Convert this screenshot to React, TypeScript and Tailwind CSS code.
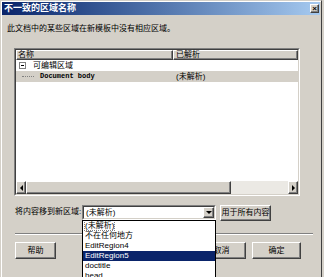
import React from 'react';

const font = "font-['Liberation_Sans','Noto_Sans_CJK_SC',sans-serif]";

// raised Win2000-style button edge
const raised =
  'bg-[#d4d0c8] border border-t-white border-l-white border-r-[#404040] border-b-[#404040] shadow-[inset_-1px_-1px_0_#808080]';

const Arrow: React.FC<{ dir: 'left' | 'right' | 'down' }> = ({ dir }) => {
  const pts = dir === 'left' ? '4,0 4,6 1,3' : dir === 'right' ? '1,0 1,6 4,3' : '0,1 6,1 3,4';
  return (
    <svg width={dir === 'down' ? 6 : 5} height={dir === 'down' ? 5 : 6} viewBox={dir === 'down' ? '0 0 6 5' : '0 0 5 6'}>
      <polygon points={pts} fill="#000" />
    </svg>
  );
};

const App: React.FC = () => {
  const options = ['(未解析)', '不在任何地方', 'EditRegion4', 'EditRegion5', 'doctitle', 'head'];

  return (
    <div className={`w-[324px] h-[277px] bg-[#d4d0c8] overflow-hidden relative text-black ${font}`}>
      <div className="w-[322px] h-[277px] border-l border-t border-r border-l-[#d4d0c8] border-t-[#d4d0c8] border-r-[#404040] shadow-[inset_1px_1px_0_#fff]">
        {/* Title bar */}
        <div className="mx-[1px] mt-[1px] h-[13px] flex items-center justify-between bg-linear-to-r from-[#0a246a] to-[#a6caf0]">
          <span className="pl-[2px] text-[9px] leading-[13px] font-bold text-white">不一致的区域名称</span>
          <div className={`${raised} w-[9px] h-[9px] mr-[1px] flex items-center justify-center`}>
            <span className="text-[8px] leading-[8px] font-bold">×</span>
          </div>
        </div>

        {/* Message */}
        <div className="mt-[9px] ml-[6px] h-[10px] text-[8px] leading-[10px]">此文档中的某些区域在新模板中没有相应区域。</div>

        {/* List */}
        <div className="mt-[14px] ml-[13px] w-[286px] h-[148px] border border-t-[#808080] border-l-[#808080] border-r-white border-b-white">
          <div className="w-full h-full border border-t-[#404040] border-l-[#404040] border-r-[#d4d0c8] border-b-[#d4d0c8] bg-white flex flex-col">
            <div className="h-[10px] flex">
              <div className={`${raised} w-[157px] h-[10px] text-[8px] leading-[8px] pl-[1px]`}>名称</div>
              <div className={`${raised} flex-1 h-[10px] text-[8px] leading-[8px] pl-[2px]`}>已解析</div>
            </div>
            <div className="h-[11px] flex items-center">
              <div className="ml-[3px] w-[7px] h-[7px] border border-[#808080] flex items-center justify-center">
                <div className="w-[3px] h-px bg-black" />
              </div>
              <span className="ml-[7px] text-[8px] leading-[11px]">可编辑区域</span>
            </div>
            <div className="h-[11px] flex items-center bg-[#d4d0c8]">
              <div className="w-[157px] flex items-center">
                <div className="ml-[6px] w-[12px] border-t border-dotted border-[#808080]" />
                <span className="ml-[6px] font-['Liberation_Mono',monospace] font-bold text-[7px] leading-[11px]">Document body</span>
              </div>
              <span className="ml-[3px] text-[8px] leading-[11px]">(未解析)</span>
            </div>
            <div className="flex-1" />
            {/* horizontal scrollbar */}
            <div className="h-[13px] flex">
              <div className={`${raised} w-[10px] h-[13px] flex items-center justify-center`}>
                <Arrow dir="left" />
              </div>
              <div className={`${raised} w-[205px] h-[13px]`} />
              <div className="flex-1 h-[13px] bg-[#ebe9e4]" />
              <div className={`${raised} w-[10px] h-[13px] flex items-center justify-center`}>
                <Arrow dir="right" />
              </div>
            </div>
          </div>
        </div>

        {/* Move content row */}
        <div className="mt-[9px] ml-[14px] flex items-start">
          <span className="w-[67px] text-[8px] leading-[14px] whitespace-nowrap">将内容移到新区域:</span>
          <div className="w-[134px] h-[15px] border border-t-[#808080] border-l-[#808080] border-r-white border-b-white">
            <div className="w-full h-full border border-t-[#404040] border-l-[#404040] border-r-[#d4d0c8] border-b-[#d4d0c8] bg-white flex">
              <span className="flex-1 pl-[2px] text-[8px] leading-[11px]">(未解析)</span>
              <div className={`${raised} w-[11px] h-[11px] flex items-center justify-center`}>
                <Arrow dir="down" />
              </div>
            </div>
          </div>
          <div className={`${raised} ml-[4px] w-[51px] h-[16px] flex items-center justify-center text-[8px]`}>用于所有内容</div>
        </div>

        {/* Separator */}
        <div className="mt-[12px] ml-[14px] w-[298px] border-t border-b border-t-[#808080] border-b-white" />

        {/* Buttons */}
        <div className="mt-[7px] ml-[14px] flex">
          <div className={`${raised} w-[41px] h-[17px] flex items-center justify-center text-[8px]`}>帮助</div>
          <div className={`${raised} ml-[141px] w-[49px] h-[17px] flex items-center justify-center text-[8px]`}>取消</div>
          <div className={`${raised} ml-[6px] w-[49px] h-[17px] flex items-center justify-center text-[8px]`}>确定</div>
        </div>
      </div>

      {/* Open dropdown list */}
      <div className="absolute left-[82px] top-[220px] w-[134px] h-[60px] border border-black bg-white overflow-hidden">
        {options.map((o, i) => (
          <div
            key={o}
            className={`h-[10px] px-[2px] text-[8px] leading-[10px] whitespace-nowrap ${
              i === 3 ? 'bg-[#0a246a] text-white' : 'text-black'
            }`}
          >
            <span className={i === 0 ? 'outline outline-dotted outline-[#808080] outline-offset-0' : ''}>{o}</span>
          </div>
        ))}
      </div>
    </div>
  );
};

export default App;
